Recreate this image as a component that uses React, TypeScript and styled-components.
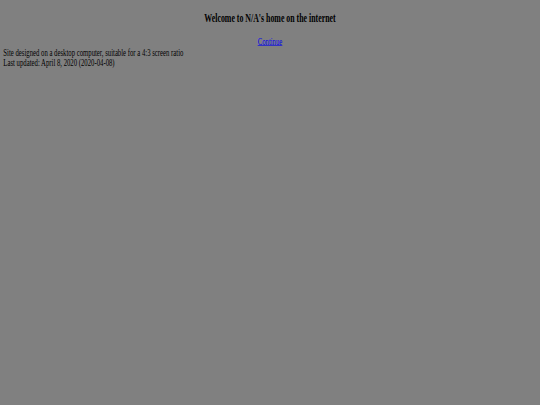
import React from 'react';
import styled, { createGlobalStyle } from 'styled-components';

const SCALE_X = 0.42;
const SCALE_Y = 0.61;

const GlobalStyle = createGlobalStyle`
  html, body {
    margin: 0;
    padding: 0;
    background: #808080;
    overflow: hidden;
  }
`;

const Frame = styled.div`
  width: 540px;
  height: 405px;
  overflow: hidden;
`;

// the page was shot on a wide desktop screen and squeezed to 540x405
const Stage = styled.div`
  width: ${540 / SCALE_X}px;
  height: ${405 / SCALE_Y}px;
  padding: 0 8px;
  box-sizing: border-box;
  transform: scale(${SCALE_X}, ${SCALE_Y});
  transform-origin: 0 0;
  font-family: 'Liberation Serif', 'Times New Roman', serif;
  font-size: 16px;
  color: #000;
  display: flow-root;
`;

const Title = styled.h3`
  margin: 1em 0;
  font-size: 1.17em;
  font-weight: bold;
  text-align: center;
`;

const Centered = styled.div`
  text-align: center;
`;

const Link = styled.a`
  color: #0000ee;
  text-decoration: underline;
`;

const Note = styled.div``;

export default function App() {
  return (
    <>
      <GlobalStyle />
      <Frame>
        <Stage>
          <Title>Welcome to N/A's home on the internet</Title>
          <Centered>
            <Link href="#">Continue</Link>
          </Centered>
          <Note>Site designed on a desktop computer, suitable for a 4:3 screen ratio</Note>
          <Note>Last updated: April 8, 2020 (2020-04-08)</Note>
        </Stage>
      </Frame>
    </>
  );
}
